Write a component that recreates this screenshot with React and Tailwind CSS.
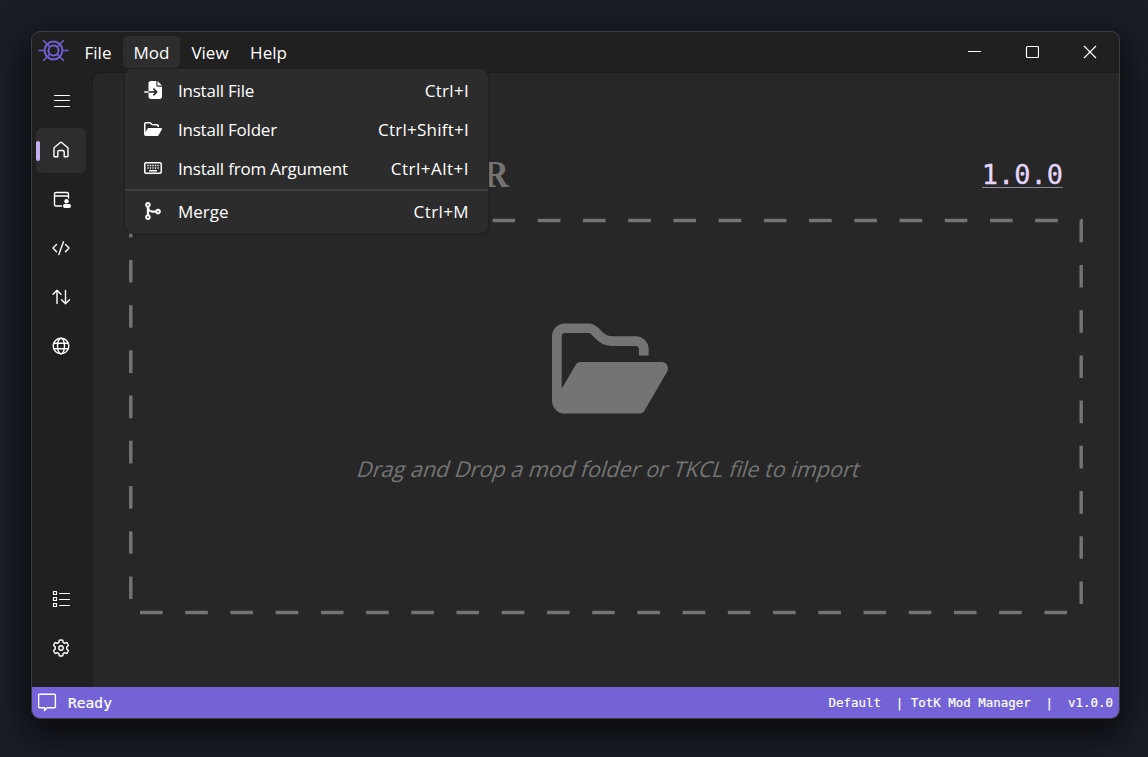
import React from "react";
import { FaFileImport, FaCodeMerge, FaRegKeyboard } from "react-icons/fa6";

const FolderOpen = ({ className }) => (
  <svg viewBox="0 32 576 448" className={className} fill="currentColor">
    <path d="M384 480l48 0c11.4 0 21.9-6 27.6-15.9l112-192c5.8-9.9 5.8-22.1 .1-32.1S555.5 224 544 224l-400 0c-11.4 0-21.9 6-27.6 15.9L48 357.1 48 96c0-8.8 7.2-16 16-16l117.5 0c4.2 0 8.3 1.7 11.3 4.7l26.5 26.5c21 21 49.5 32.8 79.2 32.8L416 144c8.8 0 16 7.2 16 16l0 32 48 0 0-32c0-35.3-28.7-64-64-64L298.5 96c-17 0-33.3-6.7-45.3-18.7L226.7 50.7c-12-12-28.3-18.7-45.3-18.7L64 32C28.7 32 0 60.7 0 96L0 416c0 35.3 28.7 64 64 64l23.7 0L384 480z" />
  </svg>
);

const Logo = () => (
  <svg viewBox="0 0 32 24" className="h-6 w-8" fill="none" stroke="#7160d2" strokeWidth="2">
    <circle cx="15.500" cy="11.500" r="8.900" />
    <circle cx="15.500" cy="11.500" r="5" />
    <path d="M0.500 11.500h6.500M24 11.500h6.500M5.200 1.200l6.800 6.800M25.800 1.200l-6.800 6.800M5.200 21.800l6.800-6.800M25.800 21.800l-6.800-6.800" strokeWidth="1.600" />
  </svg>
);

const Icon = ({ children }) => (
  <svg viewBox="0 0 20 20" className="size-5" fill="none" stroke="#fff" strokeWidth="1.400" strokeLinecap="round" strokeLinejoin="round">
    {children}
  </svg>
);

const NavItem = ({ active, children }) => (
  <div className={active ? "flex h-[45px] w-[50px] items-center rounded-md bg-[#2d2d2d]" : "flex h-[45px] w-[50px] items-center rounded-md"}>
    <span className={active ? "h-5 w-1 rounded-full bg-[#c3aef2]" : "h-5 w-1"} />
    <span className="ml-[11px]">{children}</span>
  </div>
);

const MenuRow = ({ icon, label, keys, labelClass, keysClass }) => (
  <div className="flex h-[39px] items-center pl-[19px] pr-[19px] text-white">
    <span className="flex w-[18px] justify-center">{icon}</span>
    <span className={labelClass}>{label}</span>
    <span className={keysClass}>{keys}</span>
  </div>
);

export default function App() {
  return (
    <div className="h-[757px] w-[1148px] overflow-hidden bg-[#1a1e27] p-[31px] font-['Open_Sans',sans-serif] text-[17px] text-white">
      <div className="flex h-[688px] w-[1089px] flex-col overflow-hidden rounded-[9px] border border-[#3d3c41] bg-[#202020] shadow-[0_12px_34px_8px_rgba(0,0,0,0.6)]">
        <header className="flex h-[41px] shrink-0 items-start">
          <div className="ml-[6px] mt-[7px] w-8"><Logo /></div>
          <nav className="ml-[5px] flex pt-1">
            <div className="flex h-8 w-[46px] items-center justify-center pt-[2px]">File</div>
            <div className="relative ml-[2px] flex h-8 w-[57px] items-center justify-center rounded-[5px] bg-[#2d2d2d] pt-[2px]">
              Mod
              <div className="absolute left-[2px] top-[33px] z-10 h-[164px] w-[363px] overflow-hidden rounded-[8px] bg-[#2c2c2c] pt-[2px] shadow-[0_0_0_1px_#222,0_1px_3px_rgba(0,0,0,0.4)]">
                <MenuRow icon={<FaFileImport className="mb-[2px] size-[18px]" />} label="Install File" keys="Ctrl+I" labelClass="ml-[16px] tracking-[-0.22px]" keysClass="ml-auto tracking-[0.3px]" />
                <MenuRow icon={<FolderOpen className="mb-[2px] h-[14px] w-[18px]" />} label="Install Folder" keys="Ctrl+Shift+I" labelClass="ml-[16px] tracking-[-0.22px]" keysClass="ml-auto tracking-[0.240px]" />
                <MenuRow icon={<FaRegKeyboard className="mb-[2px] size-[18px]" />} label="Install from Argument" keys="Ctrl+Alt+I" labelClass="ml-[16px] tracking-[-0.2px]" keysClass="ml-auto tracking-[0.5px]" />
                <div className="my-[1px] h-[2px] bg-[#3e3e3e]" />
                <MenuRow icon={<FaCodeMerge className="mb-[2px] size-[18px]" />} label="Merge" keys="Ctrl+M" labelClass="ml-[16px]" keysClass="ml-auto tracking-[0.4px]" />
              </div>
            </div>
            <div className="flex h-8 w-[60px] items-center justify-center pt-[2px]">View</div>
            <div className="flex h-8 w-[57px] items-center justify-center pt-[2px]">Help</div>
          </nav>
          <div className="ml-auto mr-[22px] mt-[13px] flex gap-[44px]">
            <svg viewBox="0 0 14 14" className="size-[14px]" stroke="#fff" strokeWidth="1"><path d="M1 6.500h13" /></svg>
            <svg viewBox="0 0 14 14" className="size-[14px]" fill="none" stroke="#fff" strokeWidth="1.200"><rect x="1.500" y="1.500" width="12" height="11" rx="1.300" /></svg>
            <svg viewBox="0 0 14 14" className="size-[14px]" stroke="#fff" strokeWidth="1.200"><path d="M1 1l12 12M13 1L1 13" /></svg>
          </div>
        </header>

        <div className="flex min-h-0 flex-1">
          <aside className="flex w-[61px] shrink-0 flex-col items-center gap-1 pb-[17px] pr-[3px] pt-[6px]">
            <NavItem><Icon><path d="M3.500 3.500h15M3.500 8.500h15M3.500 14.500h15" strokeWidth="1" /></Icon></NavItem>
            <NavItem active><Icon><path d="M3 7.300a1 1 0 0 1 .35-.8l6-5a1 1 0 0 1 1.300 0l6 5a1 1 0 0 1 .35.800V15a.8.800 0 0 1-.8.800h-3V11a1.500 1.500 0 0 0-1.500-1.500h-3A1.500 1.500 0 0 0 6.800 11v4.800h-3A.8.800 0 0 1 3 15z" /></Icon></NavItem>
            <NavItem><Icon><path d="M10.500 16H5A1.500 1.500 0 0 1 3.500 14.500v-10.500a1.500 1.500 0 0 1 1.500-1.500h11a1.500 1.500 0 0 1 1.500 1.500V8M3.500 6h14" /><circle cx="15.500" cy="11.300" r="2.200" fill="#fff" stroke="none" /><rect x="12" y="14" width="8" height="4" rx="2" fill="#fff" stroke="none" /></Icon></NavItem>
            <div className="-mt-px"><NavItem><Icon><path d="M5.500 6.500L2 10l3.500 3.800M14.500 6.500L18 10l-3.500 3.800M12.500 3.800L7.800 16.500" /></Icon></NavItem></div>
            <NavItem><Icon><path d="M6 16.500V3.500M2 7.300l4-4 4 4M14.500 3.500v13M10.500 12.700l4 4 4-4" /></Icon></NavItem>
            <NavItem><Icon><circle cx="10" cy="10" r="7.800" /><ellipse cx="10" cy="10" rx="3.500" ry="7.800" /><path d="M3 7.300h14M3 12.700h14" /></Icon></NavItem>
            <div className="flex-1" />
            <NavItem><Icon><path d="M8.500 4.500h10M8.500 10.500h10M8.500 16.500h10" strokeWidth="1" /><path d="M2.500 2.500h3v3h-3zM2.500 8.500h3v3h-3zM2.500 14.500h3v3h-3z" strokeWidth="1.200" /></Icon></NavItem>
            <NavItem><Icon><path d="M8.300 2.200a8 8 0 0 1 3.400 0l.4 2.200 1.500.9 2.100-.8a8 8 0 0 1 1.700 2.900L15.700 8.900v2.200l1.700 1.500a8 8 0 0 1-1.700 2.900l-2.100-.8-1.500.9-.4 2.200a8 8 0 0 1-3.400 0l-.4-2.200-1.500-.9-2.100.8a8 8 0 0 1-1.700-2.900l1.700-1.500V8.900L2.600 7.400a8 8 0 0 1 1.700-2.900l2.100.8 1.500-.9z" /><circle cx="10" cy="10" r="2.200" /></Icon></NavItem>
          </aside>
          <main className="relative flex-1 rounded-tl-[8px] bg-[#272727] shadow-[0_0_0_1px_#1c1c1c]">
            <div className="flex h-[146px] items-start justify-between pl-[391px] pr-[56px] pt-[80px]">
              <span className="origin-left scale-x-[0.920] font-['Liberation_Serif',serif] text-[37px] font-bold leading-[44px] text-[#747474]">R</span>
              <a className="mt-[6px] h-[29px] border-b border-[#8d8794] font-['DejaVu_Sans_Mono',monospace] text-[27px] leading-[29px] text-[#e6d6fb] [-webkit-text-stroke:0.300px_#e6d6fb]"><span className="relative top-px">1.0.0</span></a>
            </div>
            <svg className="absolute left-0 top-0 h-[614px] w-[1026px]" viewBox="93 73 1026 614" fill="none">
              <path d="M130.800 220.500H1081.200V612.500H130.800Z" stroke="#747474" strokeWidth="3.400" strokeDasharray="22.610 22.610" />
            </svg>
            <div className="flex flex-col items-center pl-[7px] pt-[104px]">
              <FolderOpen className="h-[91px] w-[116px] text-[#747474]" />
              <p className="mt-[38px] -skew-x-[17deg] whitespace-nowrap text-[21.600px] leading-[34px] text-[#747474]">Drag and Drop a mod folder or TKCL file to import</p>
            </div>
          </main>
        </div>

        <footer className="relative flex h-[31px] shrink-0 items-center bg-[#7363d6] pl-[6px] pr-[6px] font-['DejaVu_Sans_Mono',monospace]">
          <svg viewBox="0 0 20 20" className="size-5" fill="none" stroke="#fff" strokeWidth="1.400" strokeLinejoin="round"><path d="M1.500 1.300h15a.9.900 0 0 1 .9.900v11.600a.9.900 0 0 1-.9.900H9.200L6.500 17.500v-2.800H1.500a.9.900 0 0 1-.9-.9V2.200A.9.900 0 0 1 1.500 1.300z" /></svg>
          <span className="ml-[10px] text-[14.600px] [-webkit-text-stroke:0.200px_#fff]">Ready</span>
          <span className="ml-auto whitespace-pre pt-px text-[12.450px] [-webkit-text-stroke:0.200px_#fff]">Default  | TotK Mod Manager  |  v1.0.0</span>
        </footer>
      </div>
    </div>
  );
}
